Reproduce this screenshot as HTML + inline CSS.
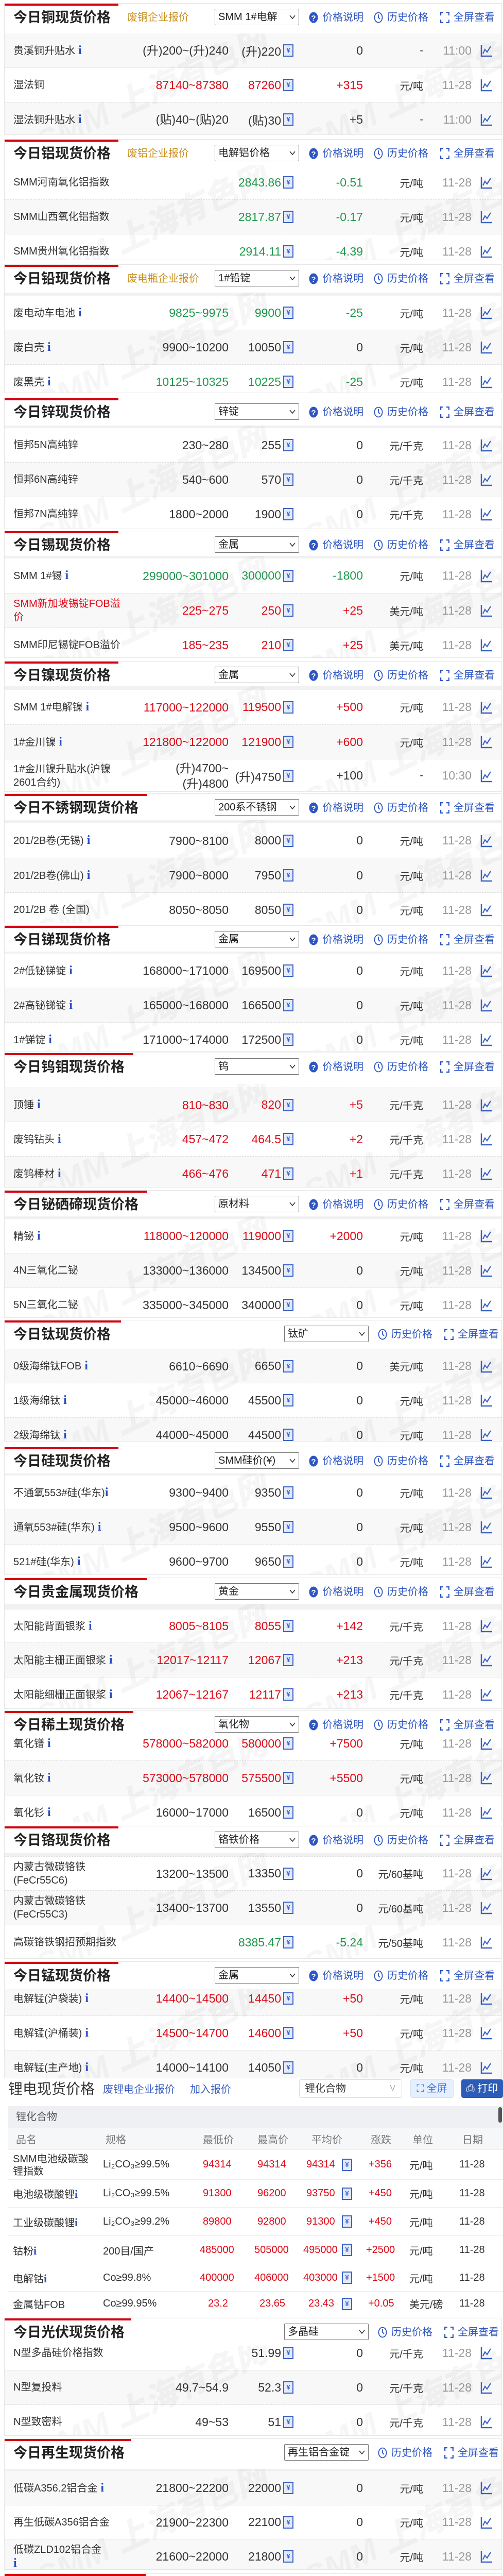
<!DOCTYPE html>
<html style="width:977px;height:5245px;overflow:hidden"><head><meta charset="utf-8">
<style>
*{margin:0;padding:0;box-sizing:border-box}
html,body{width:977px;height:5245px;overflow:hidden}
body{position:relative;background:#fff;font-family:"Liberation Sans","Noto Sans CJK SC",sans-serif;color:#333}
.s{position:absolute;left:8px;width:967px;border:1px solid #e6e6e6;overflow:hidden;background:#fff}
.rb{position:absolute;left:0;top:0;height:4px;background:#d7000f;z-index:5}
.hd{position:absolute;left:0;top:0;right:0;background:#fff;z-index:3}
.band{position:absolute;left:0;right:0;background:#f1f1f1}
.t{position:absolute;left:17px;top:9px;font:700 27px/36px "Liberation Sans","Noto Sans CJK SC",sans-serif;color:#222;white-space:nowrap}
.lk{position:absolute;left:238px;top:13px;font-size:20px;line-height:28px;color:#c8901f;white-space:nowrap}
.sel{position:absolute;left:408px;top:10px;width:164px;height:32px;border:1px solid #777;border-radius:2px;font-size:20px;line-height:30px;padding-left:6px;color:#222;white-space:nowrap;overflow:hidden;background:#fff}
.sel.w{left:543px}
.sel svg{position:absolute;right:6px;top:10px}
.op{position:absolute;top:13px;font-size:20px;line-height:28px;color:#2d55c3;white-space:nowrap;display:flex;align-items:center}
.op svg{margin-right:8px}
.r{position:absolute;left:0;right:0;display:flex;align-items:center;border-bottom:1px dashed #dcdcdc;padding-left:17px;z-index:1}
.r.gy{background:#f8f8f8}
.n{width:210px;font-size:20px;line-height:26px;color:#333}
.n i{font:700 24px "Liberation Serif",serif;color:#2b4fc0;margin-left:6px;font-style:normal}
.g,.a,.c,.d{font-size:23px;text-align:right;white-space:nowrap}
.g{width:208px;line-height:30px}.a{width:102px}
.c{width:135px}.u{width:117px;text-align:right;font-size:20px;white-space:nowrap}
.d{width:94px;color:#999}
.y{width:20px;height:24px;border:2px solid #3a62c8;margin-left:4px;background:#e3eafc;position:relative;flex:none}
.y:after{content:"¥";position:absolute;left:0;right:0;top:2px;text-align:center;font:700 13px "Liberation Sans",sans-serif;color:#3a62c8}
.k{margin-left:17px;flex:none}
.R .g,.R .a,.R .c{color:#df0a18}
.G .g,.G .a,.G .c{color:#1f9a4c}
.wm{position:absolute;font:italic 900 64px "Liberation Sans","Noto Sans CJK SC",sans-serif;color:rgba(0,0,0,.035);transform:rotate(-25deg);white-space:nowrap;z-index:2;pointer-events:none}
.li{position:absolute;left:16px;width:961px;font-size:20px}
.lr{position:absolute;left:16px;width:961px;display:flex;align-items:center;border-bottom:1px solid #eee;font-size:20px;overflow:hidden}
.lr span{position:absolute;white-space:nowrap}
.lr .rd{color:#df0a18}
</style></head><body>
<svg width="0" height="0" style="position:absolute;left:0;top:0">
<defs>
<symbol id="ch" viewBox="0 0 24 26"><path d="M2 2V24H23" fill="none" stroke="#3a62c8" stroke-width="2.5"/><path d="M5 19L9 11L13 16L20 5" fill="none" stroke="#3a62c8" stroke-width="2.2"/></symbol>
<symbol id="q" viewBox="0 0 18 22"><ellipse cx="9" cy="11" rx="8.5" ry="10.5" fill="#2d55c3"/><text x="9" y="17" text-anchor="middle" font-size="15" font-weight="700" fill="#fff" font-family="Liberation Sans">?</text></symbol>
<symbol id="clk" viewBox="0 0 18 22"><ellipse cx="9" cy="11" rx="7.5" ry="9.5" fill="none" stroke="#2d55c3" stroke-width="1.8"/><path d="M9 5V11L12 14" fill="none" stroke="#2d55c3" stroke-width="1.8"/></symbol>
<symbol id="fs" viewBox="0 0 18 22"><path d="M1 7V1H6M12 1H17V7M17 15V21H12M6 21H1V15" fill="none" stroke="#2d55c3" stroke-width="2.4"/></symbol>
<symbol id="dn" viewBox="0 0 12 10"><path d="M1 2L6 8L11 2" fill="none" stroke="#333" stroke-width="1.6"/></symbol>
</defs></svg>

<!-- COPPER -->
<div class="s" style="top:6px;height:256px">
<div class="rb" style="width:221px"></div>
<div class="hd" style="height:58px"><div class="t">今日铜现货价格</div><div class="lk">废铜企业报价</div>
<div class="sel">SMM 1#电解<svg width="12" height="10"><use href="#dn"/></svg></div>
<div class="op" style="left:591px"><svg width="18" height="22"><use href="#q"/></svg>价格说明</div>
<div class="op" style="left:717px"><svg width="18" height="22"><use href="#clk"/></svg>历史价格</div>
<div class="op" style="left:846px"><svg width="18" height="22"><use href="#fs"/></svg>全屏查看</div></div>
<div class="r gy" style="top:58px;height:67px"><div class="n">贵溪铜升贴水<i>i</i></div><div class="g">(升)200~(升)240</div><div class="a">(升)220</div><b class="y"></b><div class="c">0</div><div class="u">-</div><div class="d">11:00</div><svg class="k" width="24" height="26"><use href="#ch"/></svg></div>
<div class="r R" style="top:125px;height:67px"><div class="n">湿法铜</div><div class="g">87140~87380</div><div class="a">87260</div><b class="y"></b><div class="c">+315</div><div class="u">元/吨</div><div class="d">11-28</div><svg class="k" width="24" height="26"><use href="#ch"/></svg></div>
<div class="r gy" style="top:192px;height:67px"><div class="n">湿法铜升贴水<i>i</i></div><div class="g">(贴)40~(贴)20</div><div class="a">(贴)30</div><b class="y"></b><div class="c">+5</div><div class="u">-</div><div class="d">11:00</div><svg class="k" width="24" height="26"><use href="#ch"/></svg></div>
<div class="wm" style="left:40px;top:120px">SMM 上海有色网</div><div class="wm" style="left:560px;top:120px">SMM 上海有色网</div>
</div>

<!-- ALUMINIUM -->
<div class="s" style="top:270px;height:235px">
<div class="rb" style="width:221px"></div>
<div class="hd" style="height:50px"><div class="t">今日铝现货价格</div><div class="lk">废铝企业报价</div>
<div class="sel">电解铝价格<svg width="12" height="10"><use href="#dn"/></svg></div>
<div class="op" style="left:591px"><svg width="18" height="22"><use href="#q"/></svg>价格说明</div>
<div class="op" style="left:717px"><svg width="18" height="22"><use href="#clk"/></svg>历史价格</div>
<div class="op" style="left:846px"><svg width="18" height="22"><use href="#fs"/></svg>全屏查看</div></div>
<div class="r G" style="top:50px;height:67px"><div class="n">SMM河南氧化铝指数</div><div class="g"></div><div class="a">2843.86</div><b class="y"></b><div class="c">-0.51</div><div class="u">元/吨</div><div class="d">11-28</div><svg class="k" width="24" height="26"><use href="#ch"/></svg></div>
<div class="r G gy" style="top:117px;height:67px"><div class="n">SMM山西氧化铝指数</div><div class="g"></div><div class="a">2817.87</div><b class="y"></b><div class="c">-0.17</div><div class="u">元/吨</div><div class="d">11-28</div><svg class="k" width="24" height="26"><use href="#ch"/></svg></div>
<div class="r G" style="top:184px;height:67px"><div class="n">SMM贵州氧化铝指数</div><div class="g"></div><div class="a">2914.11</div><b class="y"></b><div class="c">-4.39</div><div class="u">元/吨</div><div class="d">11-28</div><svg class="k" width="24" height="26"><use href="#ch"/></svg></div>
<div class="wm" style="left:40px;top:120px">SMM 上海有色网</div><div class="wm" style="left:560px;top:120px">SMM 上海有色网</div>
</div>

<!-- LEAD -->
<div class="s" style="top:513px;height:250px">
<div class="rb" style="width:221px"></div>
<div class="hd" style="height:54px"><div class="t">今日铅现货价格</div><div class="lk">废电瓶企业报价</div>
<div class="sel">1#铅锭<svg width="12" height="10"><use href="#dn"/></svg></div>
<div class="op" style="left:591px"><svg width="18" height="22"><use href="#q"/></svg>价格说明</div>
<div class="op" style="left:717px"><svg width="18" height="22"><use href="#clk"/></svg>历史价格</div>
<div class="op" style="left:846px"><svg width="18" height="22"><use href="#fs"/></svg>全屏查看</div></div>
<div class="band" style="top:54px;height:6px"></div>
<div class="r G" style="top:60px;height:67px"><div class="n">废电动车电池<i>i</i></div><div class="g">9825~9975</div><div class="a">9900</div><b class="y"></b><div class="c">-25</div><div class="u">元/吨</div><div class="d">11-28</div><svg class="k" width="24" height="26"><use href="#ch"/></svg></div>
<div class="r gy" style="top:127px;height:67px"><div class="n">废白壳<i>i</i></div><div class="g">9900~10200</div><div class="a">10050</div><b class="y"></b><div class="c">0</div><div class="u">元/吨</div><div class="d">11-28</div><svg class="k" width="24" height="26"><use href="#ch"/></svg></div>
<div class="r G" style="top:194px;height:67px"><div class="n">废黑壳<i>i</i></div><div class="g">10125~10325</div><div class="a">10225</div><b class="y"></b><div class="c">-25</div><div class="u">元/吨</div><div class="d">11-28</div><svg class="k" width="24" height="26"><use href="#ch"/></svg></div>
<div class="wm" style="left:40px;top:120px">SMM 上海有色网</div><div class="wm" style="left:560px;top:120px">SMM 上海有色网</div>
</div>

<!-- ZINC -->
<div class="s" style="top:772px;height:255px">
<div class="rb" style="width:221px"></div>
<div class="hd" style="height:53px"><div class="t">今日锌现货价格</div>
<div class="sel">锌锭<svg width="12" height="10"><use href="#dn"/></svg></div>
<div class="op" style="left:591px"><svg width="18" height="22"><use href="#q"/></svg>价格说明</div>
<div class="op" style="left:717px"><svg width="18" height="22"><use href="#clk"/></svg>历史价格</div>
<div class="op" style="left:846px"><svg width="18" height="22"><use href="#fs"/></svg>全屏查看</div></div>
<div class="band" style="top:53px;height:5px"></div>
<div class="r" style="top:58px;height:67px"><div class="n">恒邦5N高纯锌</div><div class="g">230~280</div><div class="a">255</div><b class="y"></b><div class="c">0</div><div class="u">元/千克</div><div class="d">11-28</div><svg class="k" width="24" height="26"><use href="#ch"/></svg></div>
<div class="r gy" style="top:125px;height:67px"><div class="n">恒邦6N高纯锌</div><div class="g">540~600</div><div class="a">570</div><b class="y"></b><div class="c">0</div><div class="u">元/千克</div><div class="d">11-28</div><svg class="k" width="24" height="26"><use href="#ch"/></svg></div>
<div class="r" style="top:192px;height:67px"><div class="n">恒邦7N高纯锌</div><div class="g">1800~2000</div><div class="a">1900</div><b class="y"></b><div class="c">0</div><div class="u">元/千克</div><div class="d">11-28</div><svg class="k" width="24" height="26"><use href="#ch"/></svg></div>
<div class="wm" style="left:40px;top:120px">SMM 上海有色网</div><div class="wm" style="left:560px;top:120px">SMM 上海有色网</div>
</div>

<!-- TIN -->
<div class="s" style="top:1030px;height:247px">
<div class="rb" style="width:221px"></div>
<div class="hd" style="height:48px"><div class="t">今日锡现货价格</div>
<div class="sel">金属<svg width="12" height="10"><use href="#dn"/></svg></div>
<div class="op" style="left:591px"><svg width="18" height="22"><use href="#q"/></svg>价格说明</div>
<div class="op" style="left:717px"><svg width="18" height="22"><use href="#clk"/></svg>历史价格</div>
<div class="op" style="left:846px"><svg width="18" height="22"><use href="#fs"/></svg>全屏查看</div></div>
<div class="band" style="top:48px;height:5px"></div>
<div class="r G" style="top:53px;height:68px"><div class="n">SMM 1#锡<i>i</i></div><div class="g">299000~301000</div><div class="a">300000</div><b class="y"></b><div class="c">-1800</div><div class="u">元/吨</div><div class="d">11-28</div><svg class="k" width="24" height="26"><use href="#ch"/></svg></div>
<div class="r R gy" style="top:121px;height:67px"><div class="n" style="color:#df0a18">SMM新加坡锡锭FOB溢价</div><div class="g">225~275</div><div class="a">250</div><b class="y"></b><div class="c">+25</div><div class="u">美元/吨</div><div class="d">11-28</div><svg class="k" width="24" height="26"><use href="#ch"/></svg></div>
<div class="r R" style="top:188px;height:67px"><div class="n">SMM印尼锡锭FOB溢价</div><div class="g">185~235</div><div class="a">210</div><b class="y"></b><div class="c">+25</div><div class="u">美元/吨</div><div class="d">11-28</div><svg class="k" width="24" height="26"><use href="#ch"/></svg></div>
<div class="wm" style="left:40px;top:120px">SMM 上海有色网</div><div class="wm" style="left:560px;top:120px">SMM 上海有色网</div>
</div>

<!-- NICKEL -->
<div class="s" style="top:1283px;height:254px">
<div class="rb" style="width:221px"></div>
<div class="hd" style="height:48px"><div class="t">今日镍现货价格</div>
<div class="sel">金属<svg width="12" height="10"><use href="#dn"/></svg></div>
<div class="op" style="left:591px"><svg width="18" height="22"><use href="#q"/></svg>价格说明</div>
<div class="op" style="left:717px"><svg width="18" height="22"><use href="#clk"/></svg>历史价格</div>
<div class="op" style="left:846px"><svg width="18" height="22"><use href="#fs"/></svg>全屏查看</div></div>
<div class="band" style="top:48px;height:7px"></div>
<div class="r R" style="top:55px;height:68px"><div class="n">SMM 1#电解镍<i>i</i></div><div class="g">117000~122000</div><div class="a">119500</div><b class="y"></b><div class="c">+500</div><div class="u">元/吨</div><div class="d">11-28</div><svg class="k" width="24" height="26"><use href="#ch"/></svg></div>
<div class="r R gy" style="top:123px;height:67px"><div class="n">1#金川镍<i>i</i></div><div class="g">121800~122000</div><div class="a">121900</div><b class="y"></b><div class="c">+600</div><div class="u">元/吨</div><div class="d">11-28</div><svg class="k" width="24" height="26"><use href="#ch"/></svg></div>
<div class="r" style="top:190px;height:64px"><div class="n">1#金川镍升贴水(沪镍2601合约)</div><div class="g">(升)4700~<br>(升)4800</div><div class="a">(升)4750</div><b class="y"></b><div class="c">+100</div><div class="u">-</div><div class="d">10:30</div><svg class="k" width="24" height="26"><use href="#ch"/></svg></div>
<div class="wm" style="left:40px;top:120px">SMM 上海有色网</div><div class="wm" style="left:560px;top:120px">SMM 上海有色网</div>
</div>

<!-- STAINLESS -->
<div class="s" style="top:1540px;height:252px">
<div class="rb" style="width:277px"></div>
<div class="hd" style="height:50px"><div class="t">今日不锈钢现货价格</div>
<div class="sel">200系不锈钢<svg width="12" height="10"><use href="#dn"/></svg></div>
<div class="op" style="left:591px"><svg width="18" height="22"><use href="#q"/></svg>价格说明</div>
<div class="op" style="left:717px"><svg width="18" height="22"><use href="#clk"/></svg>历史价格</div>
<div class="op" style="left:846px"><svg width="18" height="22"><use href="#fs"/></svg>全屏查看</div></div>
<div class="band" style="top:50px;height:7px"></div>
<div class="r" style="top:57px;height:68px"><div class="n">201/2B卷(无锡)<i>i</i></div><div class="g">7900~8100</div><div class="a">8000</div><b class="y"></b><div class="c">0</div><div class="u">元/吨</div><div class="d">11-28</div><svg class="k" width="24" height="26"><use href="#ch"/></svg></div>
<div class="r gy" style="top:125px;height:67px"><div class="n">201/2B卷(佛山)<i>i</i></div><div class="g">7900~8000</div><div class="a">7950</div><b class="y"></b><div class="c">0</div><div class="u">元/吨</div><div class="d">11-28</div><svg class="k" width="24" height="26"><use href="#ch"/></svg></div>
<div class="r" style="top:192px;height:67px"><div class="n">201/2B 卷 (全国)</div><div class="g">8050~8050</div><div class="a">8050</div><b class="y"></b><div class="c">0</div><div class="u">元/吨</div><div class="d">11-28</div><svg class="k" width="24" height="26"><use href="#ch"/></svg></div>
<div class="wm" style="left:40px;top:120px">SMM 上海有色网</div><div class="wm" style="left:560px;top:120px">SMM 上海有色网</div>
</div>

<!-- ANTIMONY -->
<div class="s" style="top:1796px;height:245px">
<div class="rb" style="width:221px"></div>
<div class="hd" style="height:50px"><div class="t">今日锑现货价格</div>
<div class="sel">金属<svg width="12" height="10"><use href="#dn"/></svg></div>
<div class="op" style="left:591px"><svg width="18" height="22"><use href="#q"/></svg>价格说明</div>
<div class="op" style="left:717px"><svg width="18" height="22"><use href="#clk"/></svg>历史价格</div>
<div class="op" style="left:846px"><svg width="18" height="22"><use href="#fs"/></svg>全屏查看</div></div>
<div class="band" style="top:50px;height:4px"></div>
<div class="r" style="top:54px;height:67px"><div class="n">2#低铋锑锭<i>i</i></div><div class="g">168000~171000</div><div class="a">169500</div><b class="y"></b><div class="c">0</div><div class="u">元/吨</div><div class="d">11-28</div><svg class="k" width="24" height="26"><use href="#ch"/></svg></div>
<div class="r gy" style="top:121px;height:67px"><div class="n">2#高铋锑锭<i>i</i></div><div class="g">165000~168000</div><div class="a">166500</div><b class="y"></b><div class="c">0</div><div class="u">元/吨</div><div class="d">11-28</div><svg class="k" width="24" height="26"><use href="#ch"/></svg></div>
<div class="r" style="top:188px;height:67px"><div class="n">1#锑锭<i>i</i></div><div class="g">171000~174000</div><div class="a">172500</div><b class="y"></b><div class="c">0</div><div class="u">元/吨</div><div class="d">11-28</div><svg class="k" width="24" height="26"><use href="#ch"/></svg></div>
<div class="wm" style="left:40px;top:120px">SMM 上海有色网</div><div class="wm" style="left:560px;top:120px">SMM 上海有色网</div>
</div>

<!-- TUNGSTEN -->
<div class="s" style="top:2043px;height:262px">
<div class="rb" style="width:250px"></div>
<div class="hd" style="height:60px"><div class="t">今日钨钼现货价格</div>
<div class="sel">钨<svg width="12" height="10"><use href="#dn"/></svg></div>
<div class="op" style="left:591px"><svg width="18" height="22"><use href="#q"/></svg>价格说明</div>
<div class="op" style="left:717px"><svg width="18" height="22"><use href="#clk"/></svg>历史价格</div>
<div class="op" style="left:846px"><svg width="18" height="22"><use href="#fs"/></svg>全屏查看</div></div>
<div class="r R gy" style="top:67px;height:67px;border-top:1px dashed #dcdcdc"><div class="n">顶锤<i>i</i></div><div class="g">810~830</div><div class="a">820</div><b class="y"></b><div class="c">+5</div><div class="u">元/千克</div><div class="d">11-28</div><svg class="k" width="24" height="26"><use href="#ch"/></svg></div>
<div class="r R" style="top:134px;height:67px"><div class="n">废钨钻头<i>i</i></div><div class="g">457~472</div><div class="a">464.5</div><b class="y"></b><div class="c">+2</div><div class="u">元/千克</div><div class="d">11-28</div><svg class="k" width="24" height="26"><use href="#ch"/></svg></div>
<div class="r R gy" style="top:201px;height:67px"><div class="n">废钨棒材<i>i</i></div><div class="g">466~476</div><div class="a">471</div><b class="y"></b><div class="c">+1</div><div class="u">元/千克</div><div class="d">11-28</div><svg class="k" width="24" height="26"><use href="#ch"/></svg></div>
<div class="wm" style="left:40px;top:120px">SMM 上海有色网</div><div class="wm" style="left:560px;top:120px">SMM 上海有色网</div>
</div>

<!-- BISMUTH -->
<div class="s" style="top:2310px;height:248px">
<div class="rb" style="width:277px"></div>
<div class="hd" style="height:50px"><div class="t">今日铋硒碲现货价格</div>
<div class="sel">原材料<svg width="12" height="10"><use href="#dn"/></svg></div>
<div class="op" style="left:591px"><svg width="18" height="22"><use href="#q"/></svg>价格说明</div>
<div class="op" style="left:717px"><svg width="18" height="22"><use href="#clk"/></svg>历史价格</div>
<div class="op" style="left:846px"><svg width="18" height="22"><use href="#fs"/></svg>全屏查看</div></div>
<div class="band" style="top:50px;height:5px"></div>
<div class="r R" style="top:55px;height:67px"><div class="n">精铋<i>i</i></div><div class="g">118000~120000</div><div class="a">119000</div><b class="y"></b><div class="c">+2000</div><div class="u">元/吨</div><div class="d">11-28</div><svg class="k" width="24" height="26"><use href="#ch"/></svg></div>
<div class="r gy" style="top:122px;height:67px"><div class="n">4N三氧化二铋</div><div class="g">133000~136000</div><div class="a">134500</div><b class="y"></b><div class="c">0</div><div class="u">元/吨</div><div class="d">11-28</div><svg class="k" width="24" height="26"><use href="#ch"/></svg></div>
<div class="r" style="top:189px;height:67px"><div class="n">5N三氧化二铋</div><div class="g">335000~345000</div><div class="a">340000</div><b class="y"></b><div class="c">0</div><div class="u">元/吨</div><div class="d">11-28</div><svg class="k" width="24" height="26"><use href="#ch"/></svg></div>
<div class="wm" style="left:40px;top:120px">SMM 上海有色网</div><div class="wm" style="left:560px;top:120px">SMM 上海有色网</div>
</div>

<!-- TITANIUM -->
<div class="s" style="top:2562px;height:236px">
<div class="rb" style="width:226px"></div>
<div class="hd" style="height:54px"><div class="t">今日钛现货价格</div>
<div class="sel w">钛矿<svg width="12" height="10"><use href="#dn"/></svg></div>
<div class="op" style="left:725px"><svg width="18" height="22"><use href="#clk"/></svg>历史价格</div>
<div class="op" style="left:854px"><svg width="18" height="22"><use href="#fs"/></svg>全屏查看</div></div>
<div class="r gy" style="top:55px;height:67px;border-top:1px dashed #dcdcdc"><div class="n">0级海绵钛FOB<i>i</i></div><div class="g">6610~6690</div><div class="a">6650</div><b class="y"></b><div class="c">0</div><div class="u">美元/吨</div><div class="d">11-28</div><svg class="k" width="24" height="26"><use href="#ch"/></svg></div>
<div class="r" style="top:122px;height:67px"><div class="n">1级海绵钛<i>i</i></div><div class="g">45000~46000</div><div class="a">45500</div><b class="y"></b><div class="c">0</div><div class="u">元/吨</div><div class="d">11-28</div><svg class="k" width="24" height="26"><use href="#ch"/></svg></div>
<div class="r gy" style="top:189px;height:67px"><div class="n">2级海绵钛<i>i</i></div><div class="g">44000~45000</div><div class="a">44500</div><b class="y"></b><div class="c">0</div><div class="u">元/吨</div><div class="d">11-28</div><svg class="k" width="24" height="26"><use href="#ch"/></svg></div>
<div class="wm" style="left:40px;top:120px">SMM 上海有色网</div><div class="wm" style="left:560px;top:120px">SMM 上海有色网</div>
</div>

<!-- SILICON -->
<div class="s" style="top:2808px;height:249px">
<div class="rb" style="width:221px"></div>
<div class="hd" style="height:51px"><div class="t">今日硅现货价格</div>
<div class="sel">SMM硅价(¥)<svg width="12" height="10"><use href="#dn"/></svg></div>
<div class="op" style="left:591px"><svg width="18" height="22"><use href="#q"/></svg>价格说明</div>
<div class="op" style="left:717px"><svg width="18" height="22"><use href="#clk"/></svg>历史价格</div>
<div class="op" style="left:846px"><svg width="18" height="22"><use href="#fs"/></svg>全屏查看</div></div>
<div class="band" style="top:51px;height:4px"></div>
<div class="r" style="top:55px;height:67px"><div class="n">不通氧553#硅(华东)<i style="margin-left:0">i</i></div><div class="g">9300~9400</div><div class="a">9350</div><b class="y"></b><div class="c">0</div><div class="u">元/吨</div><div class="d">11-28</div><svg class="k" width="24" height="26"><use href="#ch"/></svg></div>
<div class="r gy" style="top:122px;height:67px"><div class="n">通氧553#硅(华东)<i>i</i></div><div class="g">9500~9600</div><div class="a">9550</div><b class="y"></b><div class="c">0</div><div class="u">元/吨</div><div class="d">11-28</div><svg class="k" width="24" height="26"><use href="#ch"/></svg></div>
<div class="r" style="top:189px;height:67px"><div class="n">521#硅(华东)<i>i</i></div><div class="g">9600~9700</div><div class="a">9650</div><b class="y"></b><div class="c">0</div><div class="u">元/吨</div><div class="d">11-28</div><svg class="k" width="24" height="26"><use href="#ch"/></svg></div>
<div class="wm" style="left:40px;top:120px">SMM 上海有色网</div><div class="wm" style="left:560px;top:120px">SMM 上海有色网</div>
</div>

<!-- PRECIOUS -->
<div class="s" style="top:3062px;height:255px">
<div class="rb" style="width:277px"></div>
<div class="hd" style="height:50px"><div class="t">今日贵金属现货价格</div>
<div class="sel">黄金<svg width="12" height="10"><use href="#dn"/></svg></div>
<div class="op" style="left:591px"><svg width="18" height="22"><use href="#q"/></svg>价格说明</div>
<div class="op" style="left:717px"><svg width="18" height="22"><use href="#clk"/></svg>历史价格</div>
<div class="op" style="left:846px"><svg width="18" height="22"><use href="#fs"/></svg>全屏查看</div></div>
<div class="band" style="top:50px;height:10px"></div>
<div class="r R" style="top:60px;height:66px;border-top:1px dashed #dcdcdc"><div class="n">太阳能背面银浆<i>i</i></div><div class="g">8005~8105</div><div class="a">8055</div><b class="y"></b><div class="c">+142</div><div class="u">元/千克</div><div class="d">11-28</div><svg class="k" width="24" height="26"><use href="#ch"/></svg></div>
<div class="r R gy" style="top:126px;height:67px"><div class="n">太阳能主栅正面银浆<i>i</i></div><div class="g">12017~12117</div><div class="a">12067</div><b class="y"></b><div class="c">+213</div><div class="u">元/千克</div><div class="d">11-28</div><svg class="k" width="24" height="26"><use href="#ch"/></svg></div>
<div class="r R" style="top:193px;height:67px"><div class="n">太阳能细栅正面银浆<i>i</i></div><div class="g">12067~12167</div><div class="a">12117</div><b class="y"></b><div class="c">+213</div><div class="u">元/千克</div><div class="d">11-28</div><svg class="k" width="24" height="26"><use href="#ch"/></svg></div>
<div class="wm" style="left:40px;top:120px">SMM 上海有色网</div><div class="wm" style="left:560px;top:120px">SMM 上海有色网</div>
</div>

<!-- RARE EARTH -->
<div class="s" style="top:3320px;height:217px">
<div class="rb" style="width:250px"></div>
<div class="hd" style="height:50px"><div class="t">今日稀土现货价格</div>
<div class="sel">氧化物<svg width="12" height="10"><use href="#dn"/></svg></div>
<div class="op" style="left:591px"><svg width="18" height="22"><use href="#q"/></svg>价格说明</div>
<div class="op" style="left:717px"><svg width="18" height="22"><use href="#clk"/></svg>历史价格</div>
<div class="op" style="left:846px"><svg width="18" height="22"><use href="#fs"/></svg>全屏查看</div></div>
<div class="r R" style="top:30px;height:67px"><div class="n">氧化镨<i>i</i></div><div class="g">578000~582000</div><div class="a">580000</div><b class="y"></b><div class="c">+7500</div><div class="u">元/吨</div><div class="d">11-28</div><svg class="k" width="24" height="26"><use href="#ch"/></svg></div>
<div class="r R gy" style="top:97px;height:67px"><div class="n">氧化钕<i>i</i></div><div class="g">573000~578000</div><div class="a">575500</div><b class="y"></b><div class="c">+5500</div><div class="u">元/吨</div><div class="d">11-28</div><svg class="k" width="24" height="26"><use href="#ch"/></svg></div>
<div class="r" style="top:164px;height:67px"><div class="n">氧化钐<i>i</i></div><div class="g">16000~17000</div><div class="a">16500</div><b class="y"></b><div class="c">0</div><div class="u">元/吨</div><div class="d">11-28</div><svg class="k" width="24" height="26"><use href="#ch"/></svg></div>
<div class="wm" style="left:40px;top:110px">SMM 上海有色网</div><div class="wm" style="left:560px;top:110px">SMM 上海有色网</div>
</div>

<!-- CHROMIUM -->
<div class="s" style="top:3544px;height:258px">
<div class="rb" style="width:221px"></div>
<div class="hd" style="height:52px"><div class="t">今日铬现货价格</div>
<div class="sel">铬铁价格<svg width="12" height="10"><use href="#dn"/></svg></div>
<div class="op" style="left:591px"><svg width="18" height="22"><use href="#q"/></svg>价格说明</div>
<div class="op" style="left:717px"><svg width="18" height="22"><use href="#clk"/></svg>历史价格</div>
<div class="op" style="left:846px"><svg width="18" height="22"><use href="#fs"/></svg>全屏查看</div></div>
<div class="band" style="top:52px;height:6px"></div>
<div class="r" style="top:58px;height:67px;border-top:1px dashed #dcdcdc"><div class="n">内蒙古微碳铬铁<br>(FeCr55C6)</div><div class="g">13200~13500</div><div class="a">13350</div><b class="y"></b><div class="c">0</div><div class="u">元/60基吨</div><div class="d">11-28</div><svg class="k" width="24" height="26"><use href="#ch"/></svg></div>
<div class="r gy" style="top:125px;height:67px"><div class="n">内蒙古微碳铬铁<br>(FeCr55C3)</div><div class="g">13400~13700</div><div class="a">13550</div><b class="y"></b><div class="c">0</div><div class="u">元/60基吨</div><div class="d">11-28</div><svg class="k" width="24" height="26"><use href="#ch"/></svg></div>
<div class="r G" style="top:192px;height:67px"><div class="n">高碳铬铁钢招预期指数</div><div class="g"></div><div class="a">8385.47</div><b class="y"></b><div class="c">-5.24</div><div class="u">元/50基吨</div><div class="d">11-28</div><svg class="k" width="24" height="26"><use href="#ch"/></svg></div>
<div class="wm" style="left:40px;top:120px">SMM 上海有色网</div><div class="wm" style="left:560px;top:120px">SMM 上海有色网</div>
</div>

<!-- MANGANESE -->
<div class="s" style="top:3807px;height:227px">
<div class="rb" style="width:221px"></div>
<div class="hd" style="height:52px"><div class="t">今日锰现货价格</div>
<div class="sel">金属<svg width="12" height="10"><use href="#dn"/></svg></div>
<div class="op" style="left:591px"><svg width="18" height="22"><use href="#q"/></svg>价格说明</div>
<div class="op" style="left:717px"><svg width="18" height="22"><use href="#clk"/></svg>历史价格</div>
<div class="op" style="left:846px"><svg width="18" height="22"><use href="#fs"/></svg>全屏查看</div></div>
<div class="r R gy" style="top:38px;height:67px"><div class="n">电解锰(沪袋装)<i>i</i></div><div class="g">14400~14500</div><div class="a">14450</div><b class="y"></b><div class="c">+50</div><div class="u">元/吨</div><div class="d">11-28</div><svg class="k" width="24" height="26"><use href="#ch"/></svg></div>
<div class="r R" style="top:105px;height:67px"><div class="n">电解锰(沪桶装)<i>i</i></div><div class="g">14500~14700</div><div class="a">14600</div><b class="y"></b><div class="c">+50</div><div class="u">元/吨</div><div class="d">11-28</div><svg class="k" width="24" height="26"><use href="#ch"/></svg></div>
<div class="r gy" style="top:172px;height:67px"><div class="n">电解锰(主产地)<i>i</i></div><div class="g">14000~14100</div><div class="a">14050</div><b class="y"></b><div class="c">0</div><div class="u">元/吨</div><div class="d">11-28</div><svg class="k" width="24" height="26"><use href="#ch"/></svg></div>
<div class="wm" style="left:40px;top:110px">SMM 上海有色网</div><div class="wm" style="left:560px;top:110px">SMM 上海有色网</div>
</div>

<!-- LITHIUM -->
<div style="position:absolute;left:16px;top:4036px;font-size:28px;line-height:38px;color:#333">锂电现货价格</div>
<div style="position:absolute;left:200px;top:4042px;font-size:20px;line-height:28px;color:#3b5fc0">废锂电企业报价</div>
<div style="position:absolute;left:369px;top:4042px;font-size:20px;line-height:28px;color:#3b5fc0">加入报价</div>
<div style="position:absolute;left:581px;top:4036px;width:200px;height:36px;border:1px solid #ddd;border-radius:4px;font-size:20px;line-height:34px;padding-left:10px;color:#333">锂化合物<span style="position:absolute;right:12px;top:0;color:#aaa;font-size:16px">V</span></div>
<div style="position:absolute;left:797px;top:4036px;width:84px;height:36px;border-radius:4px;background:#e6effd;border:1px solid #d3e0f8;color:#3b6fd8;font-size:20px;line-height:34px;text-align:center">⛶ 全屏</div>
<div style="position:absolute;left:896px;top:4036px;width:81px;height:36px;border-radius:4px;background:#2d5cb8;color:#fff;font-size:20px;line-height:36px;text-align:center">⎙ 打印</div>
<div class="li" style="top:4088px;height:43px;background:#eef0f4;color:#555;line-height:43px;padding-left:15px">锂化合物<span style="position:absolute;right:2px;top:2px;width:7px;height:30px;background:#555;border-radius:4px"></span></div>
<div class="lr" style="top:4131px;height:42px;background:#f6f7f9;color:#777">
<span style="left:15px">品名</span><span style="left:189px">规格</span><span style="left:378px">最低价</span><span style="left:484px">最高价</span><span style="left:589px">平均价</span><span style="left:704px">涨跌</span><span style="left:785px">单位</span><span style="left:882px">日期</span></div>
<div class="lr" style="top:4173px;height:58px"><span style="left:9px;line-height:24px;top:6px">SMM电池级碳酸<br>锂指数</span><span style="left:184px">Li₂CO₃≥99.5%</span><span class="rd" style="left:378px">94314</span><span class="rd" style="left:484px">94314</span><span class="rd" style="left:579px">94314</span><b class="y" style="position:absolute;left:648px;margin:0"></b><span class="rd" style="left:700px">+356</span><span style="left:779px">元/吨</span><span style="left:876px">11-28</span></div>
<div class="lr" style="top:4231px;height:54px"><span style="left:9px">电池级碳酸锂<i style="font:700 22px 'Liberation Serif',serif;color:#2b4fc0;font-style:normal">i</i></span><span style="left:184px">Li₂CO₃≥99.5%</span><span class="rd" style="left:378px">91300</span><span class="rd" style="left:484px">96200</span><span class="rd" style="left:579px">93750</span><b class="y" style="position:absolute;left:648px;margin:0"></b><span class="rd" style="left:700px">+450</span><span style="left:779px">元/吨</span><span style="left:876px">11-28</span></div>
<div class="lr" style="top:4285px;height:55px"><span style="left:9px">工业级碳酸锂<i style="font:700 22px 'Liberation Serif',serif;color:#2b4fc0;font-style:normal">i</i></span><span style="left:184px">Li₂CO₃≥99.2%</span><span class="rd" style="left:378px">89800</span><span class="rd" style="left:484px">92800</span><span class="rd" style="left:579px">91300</span><b class="y" style="position:absolute;left:648px;margin:0"></b><span class="rd" style="left:700px">+450</span><span style="left:779px">元/吨</span><span style="left:876px">11-28</span></div>
<div class="lr" style="top:4340px;height:55px"><span style="left:9px">钴粉<i style="font:700 22px 'Liberation Serif',serif;color:#2b4fc0;font-style:normal">i</i></span><span style="left:184px">200目/国产</span><span class="rd" style="left:372px">485000</span><span class="rd" style="left:478px">505000</span><span class="rd" style="left:573px">495000</span><b class="y" style="position:absolute;left:648px;margin:0"></b><span class="rd" style="left:695px">+2500</span><span style="left:779px">元/吨</span><span style="left:876px">11-28</span></div>
<div class="lr" style="top:4395px;height:53px"><span style="left:9px">电解钴<i style="font:700 22px 'Liberation Serif',serif;color:#2b4fc0;font-style:normal">i</i></span><span style="left:184px">Co≥99.8%</span><span class="rd" style="left:372px">400000</span><span class="rd" style="left:478px">406000</span><span class="rd" style="left:573px">403000</span><b class="y" style="position:absolute;left:648px;margin:0"></b><span class="rd" style="left:695px">+1500</span><span style="left:779px">元/吨</span><span style="left:876px">11-28</span></div>
<div class="lr" style="top:4448px;height:48px"><span style="left:9px">金属钴FOB</span><span style="left:184px">Co≥99.95%</span><span class="rd" style="left:388px">23.2</span><span class="rd" style="left:488px">23.65</span><span class="rd" style="left:583px">23.43</span><b class="y" style="position:absolute;left:648px;margin:0"></b><span class="rd" style="left:699px">+0.05</span><span style="left:779px">美元/磅</span><span style="left:876px">11-28</span></div>

<!-- PV -->
<div class="s" style="top:4499px;height:229px">
<div class="rb" style="width:246px"></div>
<div class="hd" style="height:53px"><div class="t">今日光伏现货价格</div>
<div class="sel w">多晶硅<svg width="12" height="10"><use href="#dn"/></svg></div>
<div class="op" style="left:725px"><svg width="18" height="22"><use href="#clk"/></svg>历史价格</div>
<div class="op" style="left:854px"><svg width="18" height="22"><use href="#fs"/></svg>全屏查看</div></div>
<div class="r" style="top:34px;height:67px"><div class="n">N型多晶硅价格指数</div><div class="g"></div><div class="a">51.99</div><b class="y"></b><div class="c">0</div><div class="u">元/千克</div><div class="d">11-28</div><svg class="k" width="24" height="26"><use href="#ch"/></svg></div>
<div class="r gy" style="top:101px;height:67px"><div class="n">N型复投料</div><div class="g">49.7~54.9</div><div class="a">52.3</div><b class="y"></b><div class="c">0</div><div class="u">元/千克</div><div class="d">11-28</div><svg class="k" width="24" height="26"><use href="#ch"/></svg></div>
<div class="r" style="top:168px;height:67px"><div class="n">N型致密料</div><div class="g">49~53</div><div class="a">51</div><b class="y"></b><div class="c">0</div><div class="u">元/千克</div><div class="d">11-28</div><svg class="k" width="24" height="26"><use href="#ch"/></svg></div>
<div class="wm" style="left:40px;top:110px">SMM 上海有色网</div><div class="wm" style="left:560px;top:110px">SMM 上海有色网</div>
</div>

<!-- REGEN -->
<div class="s" style="top:4733px;height:255px">
<div class="rb" style="width:246px"></div>
<div class="hd" style="height:58px"><div class="t">今日再生现货价格</div>
<div class="sel w">再生铝合金锭<svg width="12" height="10"><use href="#dn"/></svg></div>
<div class="op" style="left:725px"><svg width="18" height="22"><use href="#clk"/></svg>历史价格</div>
<div class="op" style="left:854px"><svg width="18" height="22"><use href="#fs"/></svg>全屏查看</div></div>
<div class="band" style="top:58px;height:4px"></div>
<div class="r gy" style="top:62px;height:67px"><div class="n">低碳A356.2铝合金<i>i</i></div><div class="g">21800~22200</div><div class="a">22000</div><b class="y"></b><div class="c">0</div><div class="u">元/吨</div><div class="d">11-28</div><svg class="k" width="24" height="26"><use href="#ch"/></svg></div>
<div class="r" style="top:129px;height:66px"><div class="n">再生低碳A356铝合金</div><div class="g">21900~22300</div><div class="a">22100</div><b class="y"></b><div class="c">0</div><div class="u">元/吨</div><div class="d">11-28</div><svg class="k" width="24" height="26"><use href="#ch"/></svg></div>
<div class="r gy" style="top:195px;height:67px"><div class="n">低碳ZLD102铝合金<br><i style="margin-left:0">i</i></div><div class="g">21600~22000</div><div class="a">21800</div><b class="y"></b><div class="c">0</div><div class="u">元/吨</div><div class="d">11-28</div><svg class="k" width="24" height="26"><use href="#ch"/></svg></div>
<div class="wm" style="left:40px;top:120px">SMM 上海有色网</div><div class="wm" style="left:560px;top:120px">SMM 上海有色网</div>
</div>

<!-- SEMI -->
<div class="s" style="top:4995px;height:248px">
<div class="rb" style="width:274px"></div>
<div class="hd" style="height:50px"><div class="t">今日半导体现货价格</div>
<div class="sel w">晶片<svg width="12" height="10"><use href="#dn"/></svg></div>
<div class="op" style="left:725px"><svg width="18" height="22"><use href="#clk"/></svg>历史价格</div>
<div class="op" style="left:854px"><svg width="18" height="22"><use href="#fs"/></svg>全屏查看</div></div>
<div class="r" style="top:42px;height:67px"><div class="n">2寸磷化铟衬底</div><div class="g">1100~1250</div><div class="a">1175</div><b class="y"></b><div class="c">0</div><div class="u">元/片</div><div class="d">11-28</div><svg class="k" width="24" height="26"><use href="#ch"/></svg></div>
<div class="r gy" style="top:109px;height:67px"><div class="n">3寸磷化铟衬底</div><div class="g">1500~2400</div><div class="a">1950</div><b class="y"></b><div class="c">0</div><div class="u">元/片</div><div class="d">11-28</div><svg class="k" width="24" height="26"><use href="#ch"/></svg></div>
<div class="r" style="top:176px;height:67px"><div class="n">4寸磷化铟衬底</div><div class="g">3700~4850</div><div class="a">4275</div><b class="y"></b><div class="c">0</div><div class="u">元/片</div><div class="d">11-28</div><svg class="k" width="24" height="26"><use href="#ch"/></svg></div>
<div class="wm" style="left:40px;top:60px">SMM 上海有色网</div><div class="wm" style="left:560px;top:60px">SMM 上海有色网</div>
</div>
</body></html>
